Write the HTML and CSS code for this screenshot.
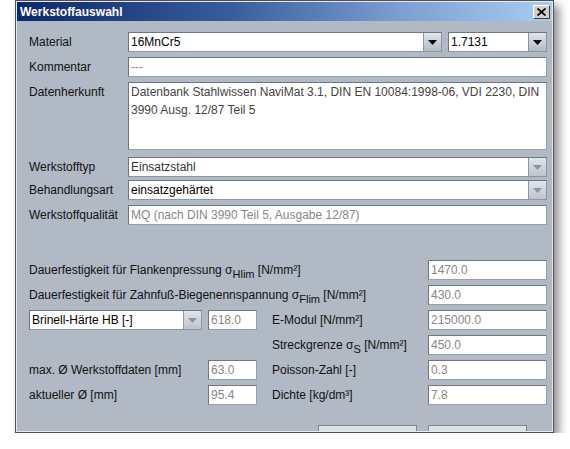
FILE: index.html
```html
<!DOCTYPE html>
<html>
<head>
<meta charset="utf-8">
<link rel="stylesheet" href="styles.css">
</head>
<body>
<div class="window">
  <div class="titlebar">
    <span class="title">Werkstoffauswahl</span>
    <span class="close"><svg width="9" height="8" viewBox="0 0 9 8"><path d="M0.5 0.5L8.5 7.5M8.5 0.5L0.5 7.5" stroke="#000" stroke-width="1.7" fill="none"/></svg></span>
  </div>
  <div class="content">
    <div class="upper">
      <div class="lbl">Material</div>
      <div class="matrow">
        <div class="combo mat"><span class="val">16MnCr5</span><span class="arrow"><svg width="9" height="5" viewBox="0 0 9 5"><path d="M0 0H9L4.5 5Z" fill="#000"/></svg></span></div>
        <div class="combo num"><span class="val">1.7131</span><span class="arrow"><svg width="9" height="5" viewBox="0 0 9 5"><path d="M0 0H9L4.5 5Z" fill="#000"/></svg></span></div>
      </div>
      <div class="lbl">Kommentar</div>
      <div class="field grey">---</div>
      <div class="lbl top">Datenherkunft</div>
      <div class="area">Datenbank Stahlwissen NaviMat 3.1, DIN EN 10084:1998-06, VDI 2230, DIN<br>3990 Ausg. 12/87 Teil 5</div>
      <div class="lbl gapped">Werkstofftyp</div>
      <div class="combo gapped"><span class="val dark">Einsatzstahl</span><span class="arrow off"><svg width="9" height="5" viewBox="0 0 9 5"><path d="M0 0H9L4.5 5Z" fill="#8e959e"/></svg></span></div>
      <div class="lbl">Behandlungsart</div>
      <div class="combo"><span class="val">einsatzgehärtet</span><span class="arrow off"><svg width="9" height="5" viewBox="0 0 9 5"><path d="M0 0H9L4.5 5Z" fill="#8e959e"/></svg></span></div>
      <div class="lbl">Werkstoffqualität</div>
      <div class="field grey">MQ (nach DIN 3990 Teil 5, Ausgabe 12/87)</div>
    </div>

    <div class="lower">
      <div class="lbl span3">Dauerfestigkeit für Flankenpressung σ<span class="sub">Hlim</span> [N/mm²]</div>
      <div class="field grey c4">1470.0</div>

      <div class="lbl span3">Dauerfestigkeit für Zahnfuß-Biegenennspannung σ<span class="sub">Flim</span> [N/mm²]</div>
      <div class="field grey c4">430.0</div>

      <div class="combo brinell"><span class="val">Brinell-Härte HB [-]</span><span class="arrow off"><svg width="9" height="5" viewBox="0 0 9 5"><path d="M0 0H9L4.5 5Z" fill="#8e959e"/></svg></span></div>
      <div class="field grey small">618.0</div>
      <div class="lbl">E-Modul [N/mm²]</div>
      <div class="field grey c4">215000.0</div>

      <div class="lbl c3">Streckgrenze σ<span class="sub">S</span> [N/mm²]</div>
      <div class="field grey c4">450.0</div>

      <div class="lbl">max. Ø Werkstoffdaten [mm]</div>
      <div class="field grey small">63.0</div>
      <div class="lbl">Poisson-Zahl [-]</div>
      <div class="field grey c4">0.3</div>

      <div class="lbl">aktueller Ø [mm]</div>
      <div class="field grey small">95.4</div>
      <div class="lbl">Dichte [kg/dm³]</div>
      <div class="field grey c4">7.8</div>
    </div>

    <div class="buttons">
      <div class="btn"></div>
      <div class="btn"></div>
    </div>
  </div>
</div>
</body>
</html>
```
FILE: styles.css
```css
* { box-sizing: border-box; }
html, body { margin: 0; background: #ffffff; }
body {
  font-family: "Liberation Sans", Arial, sans-serif;
  font-size: 12px;
  color: #000;
}
.window {
  margin-left: 15px;
  width: 539px;
  height: 433px;
  border: 1px solid #505050;
  padding: 1px;
  background: #b0b9c4;
  box-shadow: 5px 5px 9px rgba(0,0,0,0.45), inset 0 0 0 1px #e6eaee;
  overflow: hidden;
  display: flex;
  flex-direction: column;
}
.titlebar {
  height: 19px;
  flex: none;
  display: flex;
  align-items: center;
  justify-content: space-between;
  padding: 0 2px 0 3px;
  background: linear-gradient(to right, #0b286b 0%, #3a5c9c 40%, #7d9fd2 72%, #a8ccf2 100%);
}
.title { color: #fff; font-weight: bold; font-size: 12px; }
.close {
  width: 17px;
  height: 14px;
  background: #d4d0c8;
  border: 1px solid;
  border-color: #ffffff #404040 #404040 #ffffff;
  display: flex;
  align-items: center;
  justify-content: center;
}
.content {
  flex: 1;
  padding: 11px 5px 0 12px;
  overflow: hidden;
}
.upper {
  display: grid;
  grid-template-columns: 99px 419px;
  grid-template-rows: 20px 20px 68px;
  grid-auto-rows: 20px;
  row-gap: 5px;
}
.lbl {
  white-space: nowrap;
  line-height: 20px;
  color: #111;
}
.lbl.top { line-height: 18px; padding-top: 1px; }
.gapped { margin-top: 2px; }
.field {
  height: 20px;
  background: #fff;
  border: 1px solid;
  border-color: #6d7782 #98a1ab #98a1ab #6d7782;
  padding: 0 2px;
  line-height: 18px;
  white-space: nowrap;
  overflow: hidden;
}
.grey { color: #878787; }
.dark { color: #333; }
.area {
  background: #fff;
  border: 1px solid;
  border-color: #6d7782 #98a1ab #98a1ab #6d7782;
  padding: 0 2px;
  line-height: 18px;
  color: #444;
  white-space: nowrap;
  overflow: hidden;
}
.matrow { display: flex; gap: 6px; }
.combo {
  height: 20px;
  display: flex;
  background: #fff;
  border: 1px solid;
  border-color: #6d7782 #8c96a0 #8c96a0 #6d7782;
}
.combo.mat { width: 314px; }
.combo.num { width: 99px; }
.combo .val {
  flex: 1;
  padding: 0 2px;
  line-height: 18px;
  white-space: nowrap;
  overflow: hidden;
}
.arrow {
  width: 18px;
  flex: none;
  background: linear-gradient(#dfe4ea, #b2bbc5);
  border-left: 1px solid #8d96a0;
  display: flex;
  align-items: center;
  justify-content: center;
}
.arrow.off { background: linear-gradient(#e2e6eb, #bcc4cd); }
.lower {
  margin-top: 35px;
  display: grid;
  grid-template-columns: 179px 64px 156px 119px;
  grid-auto-rows: 20px;
  row-gap: 5px;
}
.span3 { grid-column: 1 / span 3; }
.c3 { grid-column: 3; }
.c4 { grid-column: 4; }
.brinell { width: 173px; }
.small { width: 49px; }
.sub {
  font-size: 11px;
  vertical-align: -4px;
  line-height: 0;
}
.buttons {
  margin-top: 20px;
  display: flex;
  justify-content: flex-end;
  gap: 11px;
  padding-right: 20px;
}
.btn {
  width: 99px;
  height: 24px;
  background: #dde2e8;
  border: 1px solid #7e8792;
}
```
